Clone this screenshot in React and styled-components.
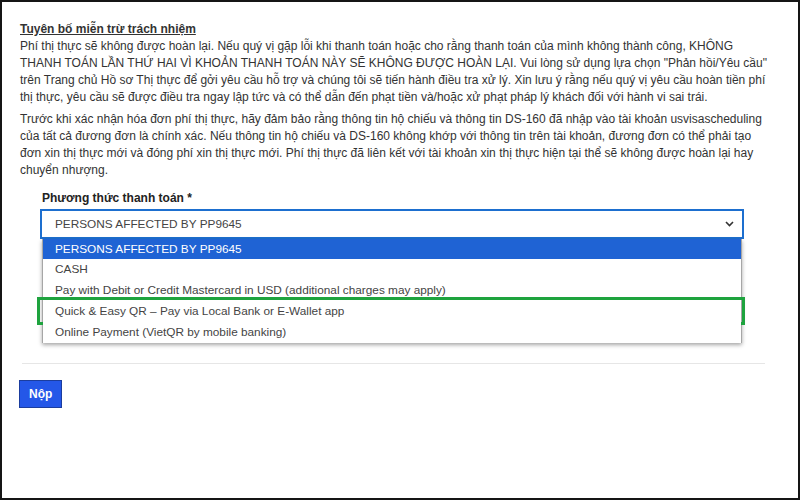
import styled, { createGlobalStyle } from 'styled-components';

const GlobalStyle = createGlobalStyle`
   html, body {
      margin: 0;
      padding: 0;
      background: #ffffff;
   }
   body {
      font-family: 'Liberation Sans', Arial, sans-serif;
   }
`;

const Frame = styled.div`
   background: #ffffff;
   border: 2px solid #151515;
   box-sizing: border-box;
   color: #333333;
   font-size: 12px;
   height: 500px;
   line-height: 17px;
   padding: 19px 18px 0 18px;
   width: 800px;
`;

const Heading = styled.div`
   font-weight: 700;
   text-decoration: underline;
`;

const Paragraph = styled.p`
   margin: 0 0 ${p => p.$gap || 0}px 0;
   white-space: nowrap;
`;

const Field = styled.div`
   display: flex;
   flex-direction: column;
   margin: 11px 0 0 20px;
   width: 704px;
`;

const Label = styled.label`
   color: #222222;
   font-weight: 700;
   margin: 0 0 2px 2px;
`;

const SelectBox = styled.div`
   align-items: center;
   border: 2px solid #1d6fcf;
   box-sizing: border-box;
   display: flex;
   height: 30px;
   justify-content: space-between;
   padding: 0 8px 0 13px;
   & .value {
      color: #444444;
      font-size: 11.8px;
   }
`;

const OptionList = styled.ul`
   border-left: 1px solid #a6a6a6;
   border-right: 1px solid #a6a6a6;
   box-shadow: 0 2px 4px rgba(0, 0, 0, 0.35);
   list-style: none;
   margin: 0 2px;
   padding: 0;
`;

const Option = styled.li`
   background: ${p => (p.$selected ? '#1f63d4' : '#ffffff')};
   color: ${p => (p.$selected ? '#ffffff' : '#444444')};
   font-size: 11.8px;
   height: ${p => (p.$selected ? 20 : 21)}px;
   line-height: ${p => (p.$selected ? 20 : 21)}px;
   padding: 0 0 0 12px;
   position: relative;
   white-space: nowrap;
   &[data-marked='true']::after {
      border: 3px solid #1ea33e;
      bottom: -3px;
      content: '';
      left: -6px;
      position: absolute;
      right: -4px;
      top: -4px;
   }
`;

const Divider = styled.hr`
   border: 0;
   border-top: 1px solid #e6e6e6;
   margin: 20px 15px 16px 2px;
`;

const SubmitButton = styled.button`
   background: #2457e8;
   border: 1px solid #1b3d9e;
   color: #ffffff;
   font-family: 'Liberation Sans', Arial, sans-serif;
   font-size: 12px;
   font-weight: 700;
   height: 28px;
   margin-left: -1px;
   padding: 0 9px;
`;

const Chevron = () => (
   <svg width='9' height='6' viewBox='0 0 9 6'>
      <path d='M1 1l3.5 3.5L8 1' fill='none' stroke='#333' strokeWidth='1.6' />
   </svg>
);

const options = [
   'PERSONS AFFECTED BY PP9645',
   'CASH',
   'Pay with Debit or Credit Mastercard in USD (additional charges may apply)',
   'Quick & Easy QR – Pay via Local Bank or E-Wallet app',
   'Online Payment (VietQR by mobile banking)',
];

const App = () => (
   <>
      <GlobalStyle />
      <Frame>
         <Heading>Tuyên bố miễn trừ trách nhiệm</Heading>
         <Paragraph $gap={5}>
            Phí thị thực sẽ không được hoàn lại. Nếu quý vị gặp lỗi khi thanh toán hoặc cho rằng thanh toán của mình không thành công, KHÔNG
            <br />
            THANH TOÁN LẦN THỨ HAI VÌ KHOẢN THANH TOÁN NÀY SẼ KHÔNG ĐƯỢC HOÀN LẠI. Vui lòng sử dụng lựa chọn "Phản hồi/Yêu cầu"
            <br />
            trên Trang chủ Hồ sơ Thị thực để gởi yêu cầu hỗ trợ và chúng tôi sẽ tiến hành điều tra xử lý. Xin lưu ý rằng nếu quý vị yêu cầu hoàn tiền phí
            <br />
            thị thực, yêu cầu sẽ được điều tra ngay lập tức và có thể dẫn đến phạt tiền và/hoặc xử phạt pháp lý khách đối với hành vi sai trái.
         </Paragraph>
         <Paragraph>
            Trước khi xác nhận hóa đơn phí thị thực, hãy đảm bảo rằng thông tin hộ chiếu và thông tin DS-160 đã nhập vào tài khoản usvisascheduling
            <br />
            của tất cả đương đơn là chính xác. Nếu thông tin hộ chiếu và DS-160 không khớp với thông tin trên tài khoản, đương đơn có thể phải tạo
            <br />
            đơn xin thị thực mới và đóng phí xin thị thực mới. Phí thị thực đã liên kết với tài khoản xin thị thực hiện tại thể sẽ không được hoàn lại hay
            <br />
            chuyển nhượng.
         </Paragraph>
         <Field>
            <Label>Phương thức thanh toán *</Label>
            <SelectBox>
               <span className='value'>{options[0]}</span>
               <Chevron />
            </SelectBox>
            <OptionList>
               {options.map((option, index) => (
                  <Option
                     key={option}
                     $selected={index === 0}
                     data-marked={index === 3}
                  >
                     {option}
                  </Option>
               ))}
            </OptionList>
         </Field>
         <Divider />
         <SubmitButton>Nộp</SubmitButton>
      </Frame>
   </>
);

export default App;
